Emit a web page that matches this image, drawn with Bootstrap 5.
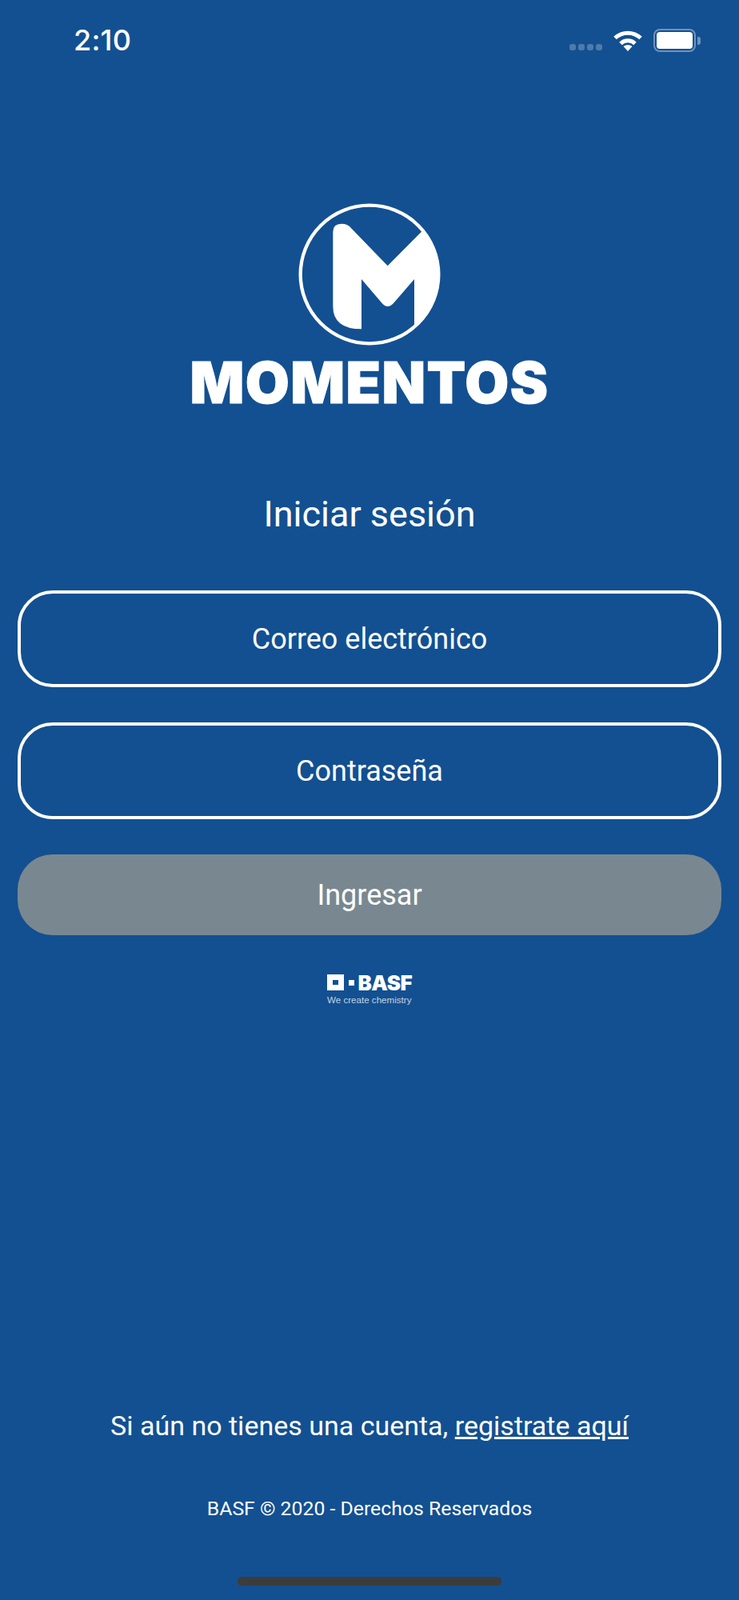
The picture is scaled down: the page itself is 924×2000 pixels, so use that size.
<!DOCTYPE html>
<html lang="es">

<head>
    <meta charset="UTF-8" />
    <meta name="viewport" content="width=device-width, initial-scale=1" />
    <title>Momentos - Iniciar sesión</title>
    <link href="https://cdn.jsdelivr.net/npm/bootstrap@5.3.2/dist/css/bootstrap.min.css" rel="stylesheet" />
    <style>
        body {
            background: #135091;
            color: #fff;
            font-family: Roboto, sans-serif;
        }

        .pantalla {
            height: 2000px;
            padding: 0 22px;
        }

        .barra-estado {
            height: 100px;
            padding: 30px 26px 0 70px;
        }

        .hora {
            font: 500 36px/40px Inter, sans-serif;
            letter-spacing: .2px;
        }

        .puntos {
            gap: 3px;
            margin-right: 14px;
            margin-top: 16px;
        }

        .puntos span {
            width: 8px;
            height: 8px;
            border-radius: 3px;
            background: #4d7bab;
        }

        .estado-iconos {
            padding-top: 6px;
        }

        .bateria {
            width: 53px;
            height: 29px;
            margin-left: 14px;
            padding: 2px;
            border: 2px solid #6d93bb;
            border-radius: 8px;
        }

        .bateria span {
            display: block;
            height: 100%;
            background: #fff;
            border-radius: 4px;
        }

        .punta-bateria {
            width: 4px;
            height: 10px;
            margin-left: 2px;
            background: #6d93bb;
            border-radius: 0 3px 3px 0;
        }

        .logo-app {
            margin-top: 153px;
        }

        .nombre-app {
            margin-top: 10px;
            font: 900 71px/66px Inter, sans-serif;
            letter-spacing: 1.4px;
            -webkit-text-stroke: 1px #fff;
        }

        .titulo-login {
            margin: 105px 0 68px;
            font-size: 45px;
            line-height: 54px;
            font-weight: 400;
        }

        .campo-login.form-control {
            height: 121px;
            margin-bottom: 44px;
            background: transparent;
            border: 4px solid #fff;
            border-radius: 44px;
            color: #fff;
            font-size: 36px;
            text-align: center;
        }

        .campo-login.form-control::placeholder {
            color: #fff;
            opacity: 1;
        }

        .btn-ingresar.btn {
            height: 101px;
            background: #798890;
            border: 0;
            border-radius: 44px;
            color: #fff;
            font-size: 36px;
        }

        .logo-basf {
            width: 106px;
            margin: 49px auto 0;
        }

        .cuadro-basf {
            width: 21px;
            height: 20px;
            border: 7px solid #fff;
        }

        .punto-basf {
            width: 7px;
            height: 7px;
            margin: 0 5px 0 6px;
            background: #fff;
        }

        .texto-basf {
            font: 900 26px/19px Inter, sans-serif;
            letter-spacing: -.6px;
        }

        .lema-basf {
            margin-top: 5px;
            font: 400 11.600px/14px "Liberation Sans", sans-serif;
            color: #c6d4e4;
            white-space: nowrap;
        }

        .pie-login {
            margin-top: auto;
        }

        .registro {
            font-size: 34px;
            line-height: 40px;
        }

        .registro a {
            color: #fff;
        }

        .derechos {
            margin-top: 70px;
            font-size: 24.800px;
            line-height: 28px;
        }

        .barra-inicio {
            width: 330px;
            height: 11px;
            margin: 71px auto 18px;
            background: #3c3c3c;
            border-radius: 5px;
        }
    </style>
</head>

<body>
    <div class="pantalla d-flex flex-column">
        <div class="barra-estado d-flex align-items-start">
            <div class="hora">2:10</div>
            <div class="estado-iconos d-flex align-items-center ms-auto">
                <div class="puntos d-flex"><span></span><span></span><span></span><span></span></div>
                <svg width="36" height="27" viewBox="0 0 36 27" fill="none" stroke="#fff" stroke-width="5">
                    <path d="M2 10.500C11 2 25 2 34 10.500" />
                    <path d="M9 17.500C14 12.500 22 12.500 27 17.500" />
                    <path d="M12.500 21L18 27L23.500 21C20.500 18.500 15.500 18.500 12.500 21Z" fill="#fff" stroke="none" />
                </svg>
                <div class="bateria"><span></span></div>
                <div class="punta-bateria"></div>
            </div>
        </div>

        <div class="text-center logo-app">
            <svg width="180" height="182" viewBox="0 0 540 546">
                <circle cx="270" cy="270" r="259" fill="none" stroke="#fff" stroke-width="13" />
                <path fill="#fff" d="M133 110Q133 80 165 80Q188 80 200 95L338 238L467 108A255 255 0 0 1 438 463L438 288L360 378Q338 402 317 378L240 288L240 475Q133 475 133 390Z" />
            </svg>
            <div class="nombre-app">MOMENTOS</div>
        </div>

        <h1 class="titulo-login text-center">Iniciar sesión</h1>

        <form>
            <input type="email" class="form-control campo-login" placeholder="Correo electrónico" />
            <input type="password" class="form-control campo-login" placeholder="Contraseña" />
            <button type="button" class="btn btn-ingresar w-100">Ingresar</button>
        </form>

        <div class="logo-basf">
            <div class="d-flex align-items-center">
                <div class="cuadro-basf"></div>
                <div class="punto-basf"></div>
                <div class="texto-basf">BASF</div>
            </div>
            <div class="lema-basf">We create chemistry</div>
        </div>

        <div class="pie-login text-center">
            <div class="registro">Si aún no tienes una cuenta, <a href="#">registrate aquí</a></div>
            <div class="derechos">BASF © 2020 - Derechos Reservados</div>
            <div class="barra-inicio"></div>
        </div>
    </div>
    <script src="https://cdn.jsdelivr.net/npm/bootstrap@5.3.2/dist/js/bootstrap.bundle.min.js"></script>
</body>

</html>
